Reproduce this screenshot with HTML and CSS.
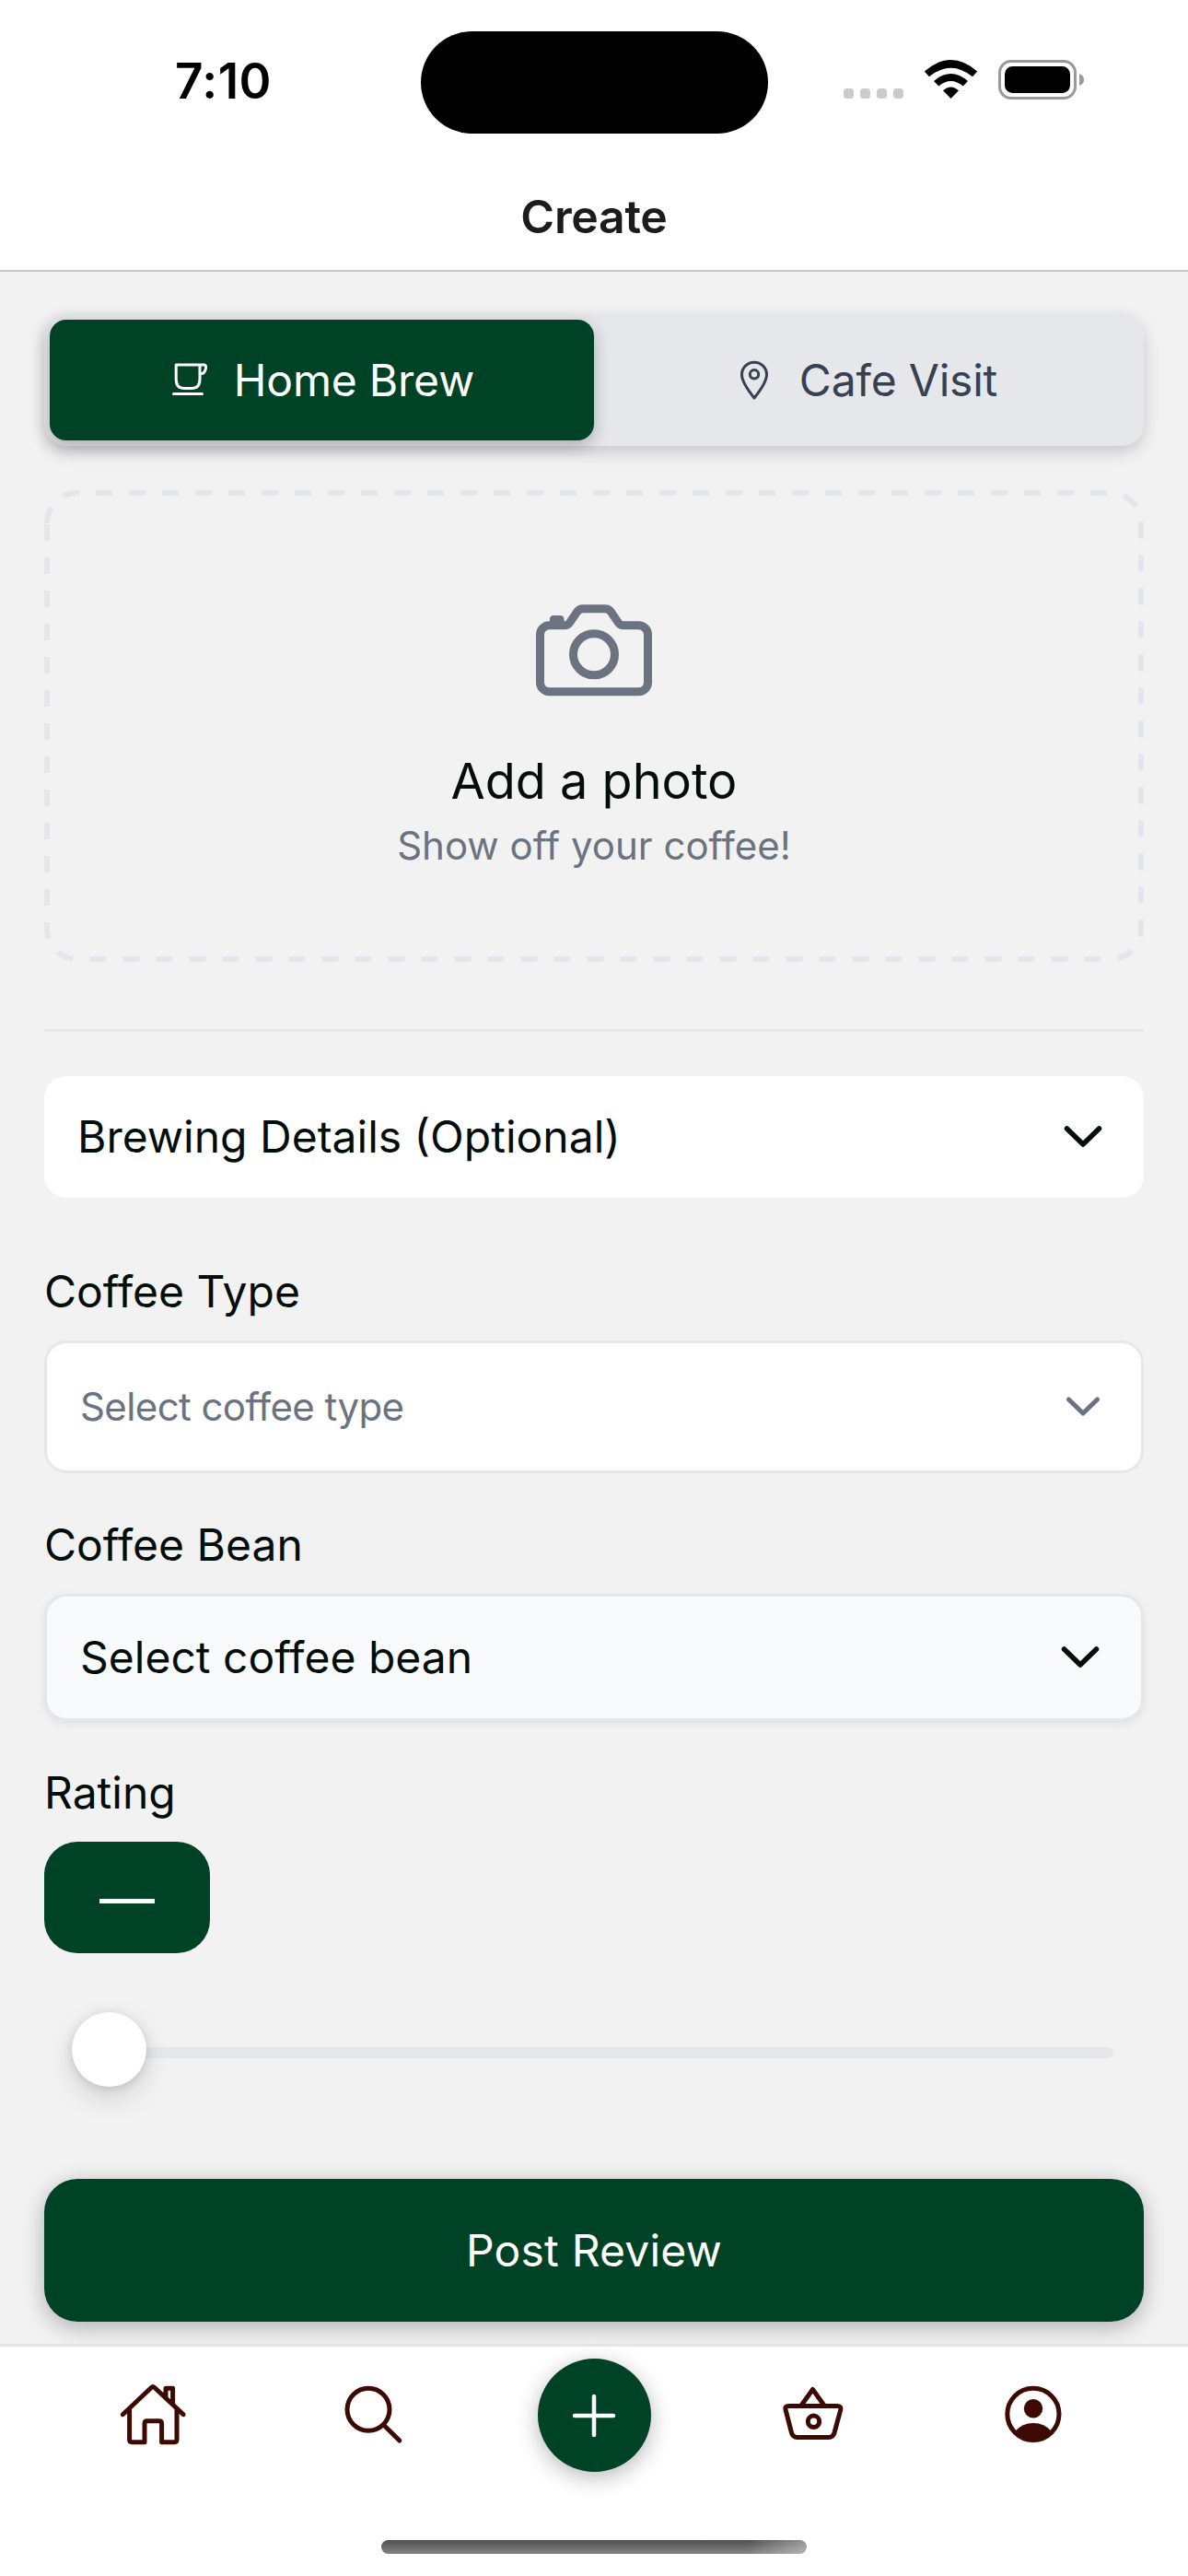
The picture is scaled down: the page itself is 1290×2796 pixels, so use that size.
FILE: index.html
```html
<!DOCTYPE html>
<html lang="en">
<head>
<meta charset="utf-8">
<title>Create</title>
<link rel="stylesheet" href="styles.css">
</head>
<body>
<div class="screen">
  <div class="status">
    <div class="status-left"><span class="time">7:10</span></div>
    <div class="island"></div>
    <svg class="status-icons" width="270" height="60" viewBox="0 0 270 60">
      <g fill="#cbcbcb"><rect x="0" y="30" width="11" height="11" rx="3.5"/><rect x="18" y="30" width="11" height="11" rx="3.5"/><rect x="36" y="30" width="11" height="11" rx="3.5"/><rect x="54" y="30" width="11" height="11" rx="3.5"/></g>
      <path d="M87.800 11.500 Q116.500 -13.500 145.200 11.500 L140 17.200 Q116.500 -1.800 93 17.200Z"/>
      <path d="M98 22 Q116.500 6 135 22 L129.700 27.500 Q116.500 16.500 103.300 27.500Z"/>
      <path d="M108 32.300 Q116.500 24.500 125 32.300 L116.500 41Z"/>
      <rect x="169.500" y="0.500" width="82" height="40" rx="12.500" fill="none" stroke="#999" stroke-width="3"/>
      <rect x="175" y="6" width="71" height="29" rx="8.500"/>
      <path d="M256 14 Q261 16 261 20.500 Q261 25 256 27Z" fill="#999"/>
    </svg>
  </div>
  <header class="header"><h1>Create</h1></header>

  <main class="content">
    <div class="toggle">
      <button class="seg active">
        <svg width="48" height="48" viewBox="0 0 48 48" fill="none" stroke="#fff" stroke-width="3" stroke-linejoin="round" stroke-linecap="round"><path d="M10.200 7H40.500Q43.200 7 42.400 11Q41.500 16.800 36 17M10.200 7V22.500Q10.200 32.500 19 32.500H27Q36 32.500 36 22.500V7M7.500 38.500H38.500"/></svg>
        <span>Home Brew</span>
      </button>
      <button class="seg">
        <svg width="48" height="48" viewBox="0 0 48 48" fill="none" stroke="#374151" stroke-width="3" stroke-linejoin="round"><path d="M24 43C18 35.500 10.500 25 10.500 17.500A13.500 13.300 0 0 1 37.500 17.500C37.500 25 30 35.500 24 43Z"/><circle cx="24" cy="17.300" r="4.700"/></svg>
        <span>Cafe Visit</span>
      </button>
    </div>

    <div class="photo">
      <svg class="dashes" width="1194" height="512" viewBox="0 0 1194 512" fill="none"><path d="M3 36A33 33 0 0 1 36 3H1158A33 33 0 0 1 1191 36V476A33 33 0 0 1 1158 509H36A33 33 0 0 1 3 476Z" stroke="#e5e6eb" stroke-width="6" stroke-dasharray="18 18"/></svg>
      <svg width="144" height="144" viewBox="0 0 144 144" fill="none" stroke="#6b7280" stroke-width="9" stroke-linejoin="round"><path d="M24 45.800H40Q43.500 45.800 45.500 43L53.500 31.200Q56 27.700 60 27.700H84Q88 27.700 90.500 31.200L98.500 43Q100.500 45.800 104 45.800H120.500A10 10 0 0 1 130.500 55.800V107.800A10 10 0 0 1 120.500 117.800H23.500A10 10 0 0 1 13.500 107.800V55.800A10 10 0 0 1 23.500 45.800Z"/><path d="M24 43V39Q24 35 28 35H35Q39.500 35 39.500 39V43Z" fill="#6b7280" stroke="none"/><circle cx="72" cy="77.300" r="22.500"/></svg>
      <p class="photo-title">Add a photo</p>
      <p class="photo-sub">Show off your coffee!</p>
    </div>

    <hr class="rule">

    <div class="card details"><span>Brewing Details (Optional)</span><svg width="42" height="26" viewBox="0 0 42 26"><path class="chev" d="M3.500 4 L21 21 L38.500 4" stroke="#030d0a" stroke-width="5.500"/></svg></div>

    <label class="label type-label">Coffee Type</label>
    <div class="card type"><span>Select coffee type</span><svg width="38" height="24" viewBox="0 0 38 24"><path class="chev" d="M3.500 4 L19 19 L34.500 4" stroke="#6b7280" stroke-width="5"/></svg></div>

    <label class="label bean-label">Coffee Bean</label>
    <div class="card bean"><span>Select coffee bean</span><svg width="42" height="26" viewBox="0 0 42 26"><path class="chev" d="M3.500 4 L21 21 L38.500 4" stroke="#030d0a" stroke-width="5.500"/></svg></div>

    <label class="label rating-label">Rating</label>
    <div class="rating"><span class="minus"></span></div>
    <div class="slider"><div class="thumb"></div><div class="track"></div></div>

    <button class="post">Post Review</button>
  </main>

  <nav class="tabs">
    <div class="tab"><svg width="78" height="78" viewBox="0 0 78 78"><path d="M5.300 38.700L36.300 9.500Q38 7.800 39.800 9.500L71 38.700M12.600 33V66Q12.600 68.700 15.300 68.700H29V48.500Q29 45.700 31.800 45.700H44.800Q47.600 45.700 47.600 48.500V68.700H61.300Q64 68.700 64 66V33M52 20.500V10.300H59.600V27"/></svg></div>
    <div class="tab"><svg width="78" height="78" viewBox="0 0 78 78"><circle cx="33" cy="33.300" r="23"/><path d="M49.500 50L66.800 67"/></svg></div>
    <div class="tab"><div class="fab"><svg width="60" height="60" viewBox="0 0 60 60"><path d="M30 9V51M9 30H51"/></svg></div></div>
    <div class="tab"><svg width="78" height="78" viewBox="0 0 78 78"><path d="M25 29L37.500 11.500L50 29M11.500 29.500H64Q68.800 29.500 67.800 33.500L61 58.500Q59.500 63.500 55 63.500H20.500Q16 63.500 14.500 58.500L8 33.500Q7 29.500 11.500 29.500Z"/><circle cx="38.500" cy="46.300" r="6.200"/></svg></div>
    <div class="tab"><svg width="78" height="78" viewBox="0 0 78 78"><circle cx="37.900" cy="38.300" r="28.100"/><circle class="solid" cx="38" cy="32.300" r="10.200"/><path class="solid" d="M18.500 56.800Q26 48 38 48Q50 48 57.500 56.800Q50 68 38 68Q26 68 18.500 56.800Z"/></svg></div>
  </nav>
  <div class="home-area"><div class="home-indicator"></div></div>
</div>
</body>
</html>
```
FILE: styles.css
```css
* { box-sizing: border-box; }
body { margin: 0; font-family: Inter, "Liberation Sans", sans-serif; color: #030d0a; background: #fff; }
svg { display: block; flex: none; }
p, h1 { margin: 0; }
button { border: 0; background: none; padding: 0; font: inherit; color: inherit; }
.screen { width: 1290px; height: 2796px; display: flex; flex-direction: column; background: #f2f2f2; overflow: hidden; }

.status { height: 177px; padding-top: 34px; background: #fff; display: grid; grid-template-columns: 457px 377px 1fr; }
.status-left { padding: 22px 0 0 190px; }
.time { font-size: 53px; line-height: 64px; font-weight: 600; letter-spacing: .5px; color: #000; }
.island { height: 111px; border-radius: 56px; background: #000; }
.status-icons { margin: 32px 0 0 82px; overflow: visible; }
.header { height: 118px; background: #fff; border-bottom: 2px solid #c6c6c7; display: flex; justify-content: center; padding-top: 28px; }
.header h1 { font-size: 50px; line-height: 60px; font-weight: 600; letter-spacing: -0.3px; color: #1c1c1e; }

.content { height: 2249px; padding: 46px 48px 0; display: flex; flex-direction: column; overflow: hidden; }
.toggle { height: 143px; padding: 6px; display: flex; border-radius: 24px; background: #e5e7eb; box-shadow: 0 6px 18px rgba(0,0,0,.18); flex: none; }
.seg { flex: 1; height: 131px; padding-right: 3px; display: flex; align-items: center; justify-content: center; gap: 25px; border-radius: 18px; font-size: 48px; letter-spacing: -.2px; color: #374151; }
.seg.active { background: #004225; color: #fff; box-shadow: 0 6px 18px rgba(0,0,0,.25); }

.photo { position: relative; flex: none; height: 512px; margin-top: 48px; padding-top: 101px; display: flex; flex-direction: column; align-items: center; }
.dashes { position: absolute; left: 0; top: 0; }
.photo-title { font-size: 54px; line-height: 66px; margin-top: 38px; }
.photo-sub { font-size: 42px; line-height: 54px; margin-top: 10px; color: #6b7280; }
.rule { flex: none; width: 100%; height: 3px; border: 0; margin: 73px 0 48px; background: #e5e7eb; }

.card { flex: none; display: flex; align-items: center; justify-content: space-between; border-radius: 24px; background: #fff; font-size: 48px; }
.card span { padding-bottom: 2px; }
.chev { fill: none; stroke-linecap: round; stroke-linejoin: round; }
.details { height: 132px; padding: 0 45px 0 36px; }
.type { height: 144px; border: 3px solid #e5e7eb; padding: 0 44px 0 36px; color: #6b7280; font-size: 42px; letter-spacing: -.6px; }
.bean { height: 138px; border: 3px solid #e5e7eb; padding: 0 45px 0 36px; background: #f9fafb; box-shadow: 0 3px 8px rgba(0,0,0,.08); }
.label { flex: none; font-size: 48px; line-height: 60px; }
.type-label { margin: 72px 0 23px; }
.bean-label { margin: 48px 0 23px; }
.rating-label { margin: 48px 0 23px; }
.rating { flex: none; width: 180px; height: 121px; border-radius: 36px; background: #004225; display: flex; justify-content: center; padding-top: 62px; }
.minus { width: 60px; height: 5px; background: #fff; }
.slider { flex: none; margin-top: 64px; height: 81px; padding: 0 33px 0 30px; display: flex; align-items: center; }
.thumb { width: 81px; height: 81px; border-radius: 50%; background: #fff; box-shadow: 0 12px 30px rgba(0,0,0,.13), 0 2px 12px rgba(0,0,0,.13); z-index: 1; }
.track { flex: 1; height: 12px; margin: 7px 0 0 -6px; border-radius: 0 6px 6px 0; background: #e5e7eb; }
.post { flex: none; margin-top: 100px; height: 155px; border-radius: 36px; background: #004225; color: #fff; font-size: 48px; letter-spacing: .2px; box-shadow: 0 6px 24px rgba(0,0,0,.28); }

.tabs { position: relative; z-index: 1; height: 150px; background: #fff; border-top: 3px solid #e5e6e9; padding: 0 48px; display: grid; grid-template-columns: repeat(5, 1fr); }
.tab { display: flex; justify-content: center; padding-top: 35px; }
.tab svg { fill: none; stroke: #3c0a02; stroke-width: 5; stroke-linecap: round; stroke-linejoin: round; }
.tab svg .solid { fill: #3c0a02; stroke: none; }
.fab { width: 123px; height: 123px; margin: -22px 0 0 1px; border-radius: 50%; background: #004225; display: flex; align-items: center; justify-content: center; box-shadow: 0 6px 24px rgba(0,0,0,.28); }
.tab .fab svg { stroke: #fff; stroke-width: 4.500; }
.home-area { flex: 1; background: #fff; display: flex; justify-content: center; padding-top: 63px; }
.home-indicator { width: 462px; height: 15px; border-radius: 8px; background: linear-gradient(100deg, transparent 86%, rgba(255,255,255,.4)), linear-gradient(#505050, #858585); }
```
